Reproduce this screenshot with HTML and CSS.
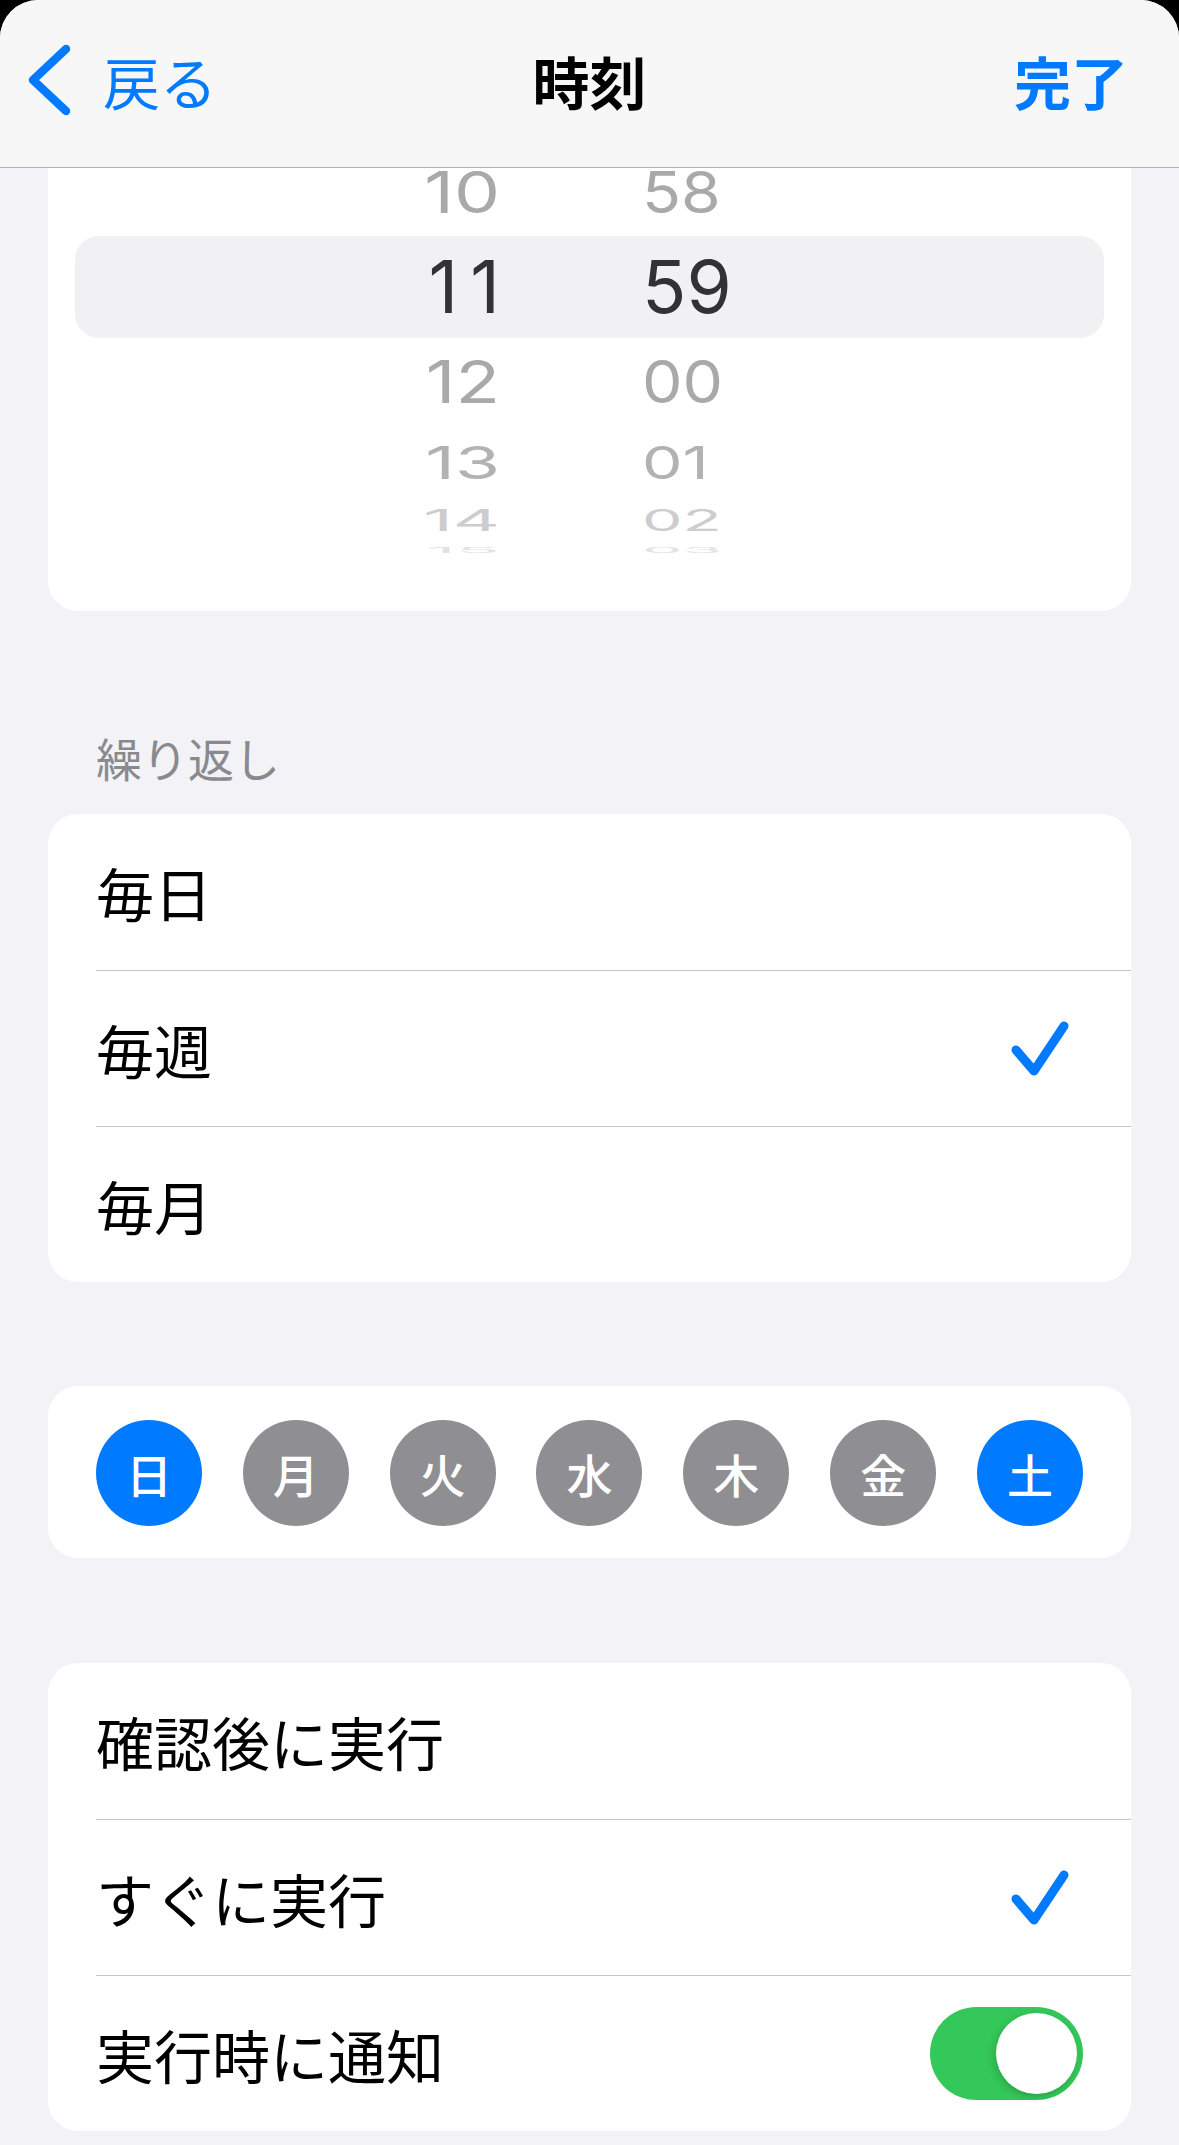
FILE: index.html
```html
<!DOCTYPE html>
<html lang="ja">
<head>
    <meta charset="UTF-8">
    <meta name="viewport" content="width=device-width, initial-scale=1.0">
    <title>時刻</title>
    <link rel="stylesheet" href="styles.css">
</head>
<body>

<div class="sheet">
    <header class="nav">
        <a class="nav-back" href="#">
            <svg class="chevron" width="48" height="76" viewBox="0 0 48 76">
                <path d="M41 7 L8 38 L41 69" fill="none" stroke="#007aff" stroke-width="8.5" stroke-linecap="round" stroke-linejoin="round"/>
            </svg>
            <span>戻る</span>
        </a>
        <h1 class="nav-title">時刻</h1>
        <a class="nav-done" href="#">完了</a>
    </header>

    <main class="content">
        <section class="card picker">
            <div class="wheel">
                <div class="wheel-row far1"><span class="hour">09</span><span class="minute">57</span></div>
                <div class="wheel-row near-up"><span class="hour">10</span><span class="minute">58</span></div>
                <div class="wheel-row selected"><span class="hour">11</span><span class="minute">59</span></div>
                <div class="wheel-row near-down"><span class="hour">12</span><span class="minute">00</span></div>
                <div class="wheel-row far1"><span class="hour">13</span><span class="minute">01</span></div>
                <div class="wheel-row far2"><span class="hour">14</span><span class="minute">02</span></div>
                <div class="wheel-row far3"><span class="hour">15</span><span class="minute">03</span></div>
            </div>
        </section>

        <h2 class="section-title">繰り返し</h2>
        <section class="card list">
            <div class="row">毎日</div>
            <div class="row">毎週
                <svg class="check" width="60" height="60" viewBox="0 0 60 60">
                    <path d="M6 31 L24 52 L54 7" fill="none" stroke="#007aff" stroke-width="9" stroke-linecap="round" stroke-linejoin="round"/>
                </svg>
            </div>
            <div class="row">毎月</div>
        </section>

        <section class="card days">
            <span class="day on">日</span>
            <span class="day">月</span>
            <span class="day">火</span>
            <span class="day">水</span>
            <span class="day">木</span>
            <span class="day">金</span>
            <span class="day on">土</span>
        </section>

        <section class="card list">
            <div class="row">確認後に実行</div>
            <div class="row">すぐに実行
                <svg class="check" width="60" height="60" viewBox="0 0 60 60">
                    <path d="M6 31 L24 52 L54 7" fill="none" stroke="#007aff" stroke-width="9" stroke-linecap="round" stroke-linejoin="round"/>
                </svg>
            </div>
            <div class="row row-switch">実行時に通知
                <span class="switch"><span class="knob"></span></span>
            </div>
        </section>
    </main>
</div>

</body>
</html>
```

FILE: styles.css
```css
html {
    background: #000;
}
body {
    margin: 0;
    font-family: "Noto Sans CJK JP", "Noto Sans", sans-serif;
    color: #000;
}
.sheet {
    min-height: 2145px;
    background: #f2f2f7;
    border-radius: 38px 38px 0 0;
    overflow: hidden;
}

/* navigation bar sits over the scrolled content */
.nav {
    position: fixed;
    top: 0;
    left: 0;
    right: 0;
    z-index: 10;
    box-sizing: border-box;
    height: 168px;
    display: grid;
    grid-template-columns: 1fr auto 1fr;
    padding: 0 25px 7px;
    background: #f7f7f7;
    border-bottom: 1px solid #b4b4b6;
    border-radius: 38px 38px 0 0;
    align-items: center;
    font-size: 57px;
    line-height: 80px;
}
.nav a {
    color: #007aff;
    text-decoration: none;
}
.nav-back {
    display: flex;
    align-items: center;
    gap: 30px;
}
.chevron {
    display: block;
}
.nav-title {
    margin: 0;
    font-size: 57px;
    font-weight: 700;
}
.nav-done {
    justify-self: end;
    margin-right: 26px;
    font-weight: 700;
}

.content {
    padding: 40px 48px 0;
}
.card {
    background: #fff;
    border-radius: 30px;
}

/* time picker */
.picker {
    padding: 22px 27px 53px;
}
.wheel-row {
    display: grid;
    grid-template-columns: 425px 1fr;
    column-gap: 142px;
    font-family: Inter, "Liberation Sans", sans-serif;
    font-size: 73px;
    color: #a9a9ab;
}
.wheel-row .hour {
    text-align: right;
}
.wheel-row .minute {
    transform: scaleX(0.88);
    transform-origin: left center;
}
.wheel-row.selected {
    height: 102px;
    line-height: 102px;
    background: #f1f1f3;
    border-radius: 24px;
    color: #323234;
}
.wheel-row.selected .hour {
    letter-spacing: 12px;
    margin-right: -12px;
}
.wheel-row.selected .minute {
    transform: none;
}
.wheel-row.near-up {
    height: 86px;
    line-height: 86px;
    transform: scaleY(0.78);
}
.wheel-row.near-down {
    height: 88px;
    line-height: 88px;
    transform: scaleY(0.81);
}
.wheel-row.far1 {
    height: 74px;
    line-height: 74px;
    transform: scaleY(0.62);
    color: #b2b2b4;
}
.wheel-row.far1:first-child {
    height: 88px;
    line-height: 88px;
}
.wheel-row.far2 {
    height: 42px;
    line-height: 42px;
    transform: scaleY(0.4);
    color: #cdcdcf;
}
.wheel-row.far3 {
    height: 16px;
    line-height: 16px;
    transform: scaleY(0.1);
    color: #e2e2e4;
}

.section-title {
    margin: 116px 0 27px 48px;
    font-size: 46px;
    line-height: 60px;
    font-weight: 400;
    color: #8a8a8e;
}

/* grouped list */
.row {
    box-sizing: border-box;
    height: 156px;
    margin-left: 48px;
    padding-right: 61px;
    display: flex;
    align-items: center;
    justify-content: space-between;
    font-size: 58px;
}
.row + .row {
    border-top: 1px solid #c6c6c8;
}
.row-switch {
    padding-right: 48px;
}
.check {
    display: block;
}

.switch {
    box-sizing: border-box;
    width: 153px;
    height: 93px;
    padding: 6px;
    border-radius: 47px;
    background: #34c759;
    display: flex;
    justify-content: flex-end;
}
.knob {
    width: 81px;
    height: 81px;
    border-radius: 50%;
    background: #fff;
    box-shadow: -2px 3px 8px rgba(0, 0, 0, 0.15), 0 3px 1px rgba(0, 0, 0, 0.04);
}

/* weekday circles */
.days {
    margin-top: 104px;
    margin-bottom: 105px;
    padding: 34px 48px 32px;
    display: flex;
    justify-content: space-between;
}
.day {
    width: 106px;
    height: 106px;
    border-radius: 50%;
    background: #8e8e93;
    color: #fff;
    display: flex;
    align-items: center;
    justify-content: center;
    font-size: 46px;
    font-weight: 500;
}
.day.on {
    background: #007aff;
}
```
